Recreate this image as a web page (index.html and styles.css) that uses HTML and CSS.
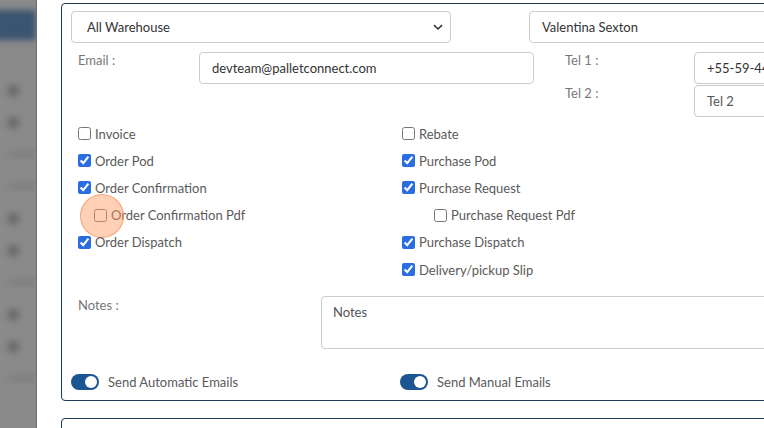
FILE: index.html
```html
<!DOCTYPE html>
<html>
<head>
<meta charset="utf-8">
<link rel="stylesheet" href="styles.css">
</head>
<body>
<div class="page">
  <aside class="sidebar">
    <div class="sidebar-inner">
      <div class="side-band"></div>
      <div class="side-item short"></div>
      <div class="side-item"><span class="dot"></span></div>
      <div class="side-item"><span class="dot"></span></div>
      <div class="side-item"><span class="bar"></span></div>
      <div class="side-item"><span class="bar"></span></div>
      <div class="side-item"><span class="dot"></span></div>
      <div class="side-item"><span class="dot"></span></div>
      <div class="side-item"><span class="bar"></span></div>
      <div class="side-item"><span class="dot"></span></div>
      <div class="side-item"><span class="dot"></span></div>
      <div class="side-item"><span class="bar"></span></div>
    </div>
  </aside>
  <main class="main">
    <section class="panel">
      <div class="row-top">
        <div class="select-wrap">
          <select class="field select"><option>All Warehouse</option></select>
        </div>
        <input class="field name" type="text" value="Valentina Sexton">
      </div>

      <div class="row-contact">
        <label class="lbl email-lbl">Email :</label>
        <input class="field email" type="text" value="devteam@palletconnect.com">
        <div class="tel-labels">
          <label class="lbl">Tel 1 :</label>
          <label class="lbl">Tel 2 :</label>
        </div>
        <div class="tel-inputs">
          <input class="field tel" type="text" value="+55-59-4471-2208">
          <input class="field tel" type="text" placeholder="Tel 2">
        </div>
      </div>

      <div class="checks">
        <div class="col">
          <label class="chk"><input type="checkbox">Invoice</label>
          <label class="chk"><input type="checkbox" checked>Order Pod</label>
          <label class="chk"><input type="checkbox" checked>Order Confirmation</label>
          <label class="chk sub-left"><span class="ripple"></span><input type="checkbox">Order Confirmation Pdf</label>
          <label class="chk"><input type="checkbox" checked>Order Dispatch</label>
        </div>
        <div class="col">
          <label class="chk"><input type="checkbox">Rebate</label>
          <label class="chk"><input type="checkbox" checked>Purchase Pod</label>
          <label class="chk"><input type="checkbox" checked>Purchase Request</label>
          <label class="chk sub-right"><input type="checkbox">Purchase Request Pdf</label>
          <label class="chk"><input type="checkbox" checked>Purchase Dispatch</label>
          <label class="chk"><input type="checkbox" checked>Delivery/pickup Slip</label>
        </div>
      </div>

      <div class="row-notes">
        <label class="lbl notes-lbl">Notes :</label>
        <textarea class="field notes" placeholder="Notes"></textarea>
      </div>

      <div class="row-toggles">
        <label class="toggle"><span class="switch on"><span class="knob"></span></span>Send Automatic Emails</label>
        <label class="toggle second"><span class="switch on"><span class="knob"></span></span>Send Manual Emails</label>
      </div>
    </section>
    <section class="panel next"></section>
  </main>
</div>
</body>
</html>
```

FILE: styles.css
```css
* { box-sizing: border-box; }
html, body {
  margin: 0;
  padding: 0;
  width: 764px;
  height: 428px;
  overflow: hidden;
  background: #fff;
  font-family: "Lato", "Open Sans", sans-serif;
  font-size: 13px;
  color: #5a5a5a;
}
.page {
  display: flex;
  height: 428px;
}
.sidebar {
  width: 37px;
  flex: none;
  background: #8a8a8a;
  border-right: 1px solid #6d6d6d;
  overflow: hidden;
}
.sidebar-inner {
  filter: blur(3px);
  padding-top: 10px;
}
.side-band {
  height: 30px;
  background: #3a5471;
  margin-left: -6px;
  margin-bottom: 8px;
}
.side-item {
  height: 32px;
  display: flex;
  align-items: center;
  padding-left: 8px;
}
.side-item.short { height: 26px; justify-content: flex-end; padding-right: 2px; }
.side-item .dot {
  width: 11px; height: 11px; border-radius: 3px; background: #6a6a6a;
}
.side-item .bar {
  width: 28px; height: 6px; background: #7e7e7e;
}
.main {
  flex: 1;
  padding: 3px 0 0 24px;
  min-width: 0;
}
.panel {
  width: 760px;
  border: 1px solid #1e3a56;
  border-radius: 4px;
  padding: 7px 0 0 9px;
  height: 398px;
  position: relative;
}
.panel.next {
  margin-top: 17px;
  height: 40px;
}
.field {
  font-family: inherit;
  font-size: 13px;
  color: #333;
  border: 1px solid #ccc;
  border-radius: 4px;
  background: #fff;
  padding: 0 12px;
  height: 32px;
  outline: none;
}
.row-top {
  display: flex;
  gap: 78px;
}
.select-wrap { position: relative; }
.select {
  width: 380px;
  appearance: none;
  -webkit-appearance: none;
  padding-left: 15px;
  background-image: url("data:image/svg+xml;utf8,<svg xmlns='http://www.w3.org/2000/svg' width='10' height='7' viewBox='0 0 10 7'><path d='M1 1.2 L5 5 L9 1.2' fill='none' stroke='%23333' stroke-width='1.6'/></svg>");
  background-repeat: no-repeat;
  background-position: right 7px center;
}
.name { width: 300px; }
.row-contact {
  display: flex;
  margin-top: 9px;
  height: 65px;
}
.lbl { color: #777; }
.email-lbl {
  width: 128px;
  padding: 0 0 0 7px;
}
.email { width: 335px; }
.tel-labels {
  display: flex;
  flex-direction: column;
  gap: 17px;
  padding: 0 0 0 31px;
  width: 160px;
}
.tel-inputs {
  display: flex;
  flex-direction: column;
  gap: 1px;
}
.tel { width: 120px; }
.tel::placeholder { color: #555; }
.checks {
  display: flex;
  padding: 3px 0 0 7px;
  height: 179px;
}
.col {
  display: flex;
  flex-direction: column;
  width: 324px;
}
.chk {
  display: flex;
  align-items: center;
  height: 27.2px;
  position: relative;
}
.chk input {
  margin: 0 4px 0 0;
  width: 13px;
  height: 13px;
  accent-color: #2a6de0;
}
.sub-left { padding-left: 16px; }
.sub-right { padding-left: 32px; }
.ripple {
  position: absolute;
  left: 2px;
  top: -8px;
  width: 44px;
  height: 44px;
  border-radius: 50%;
  background: rgba(255, 150, 90, 0.45);
  border: 1.5px solid rgba(245, 150, 95, 0.8);
}
.row-notes {
  display: flex;
  height: 75px;
}
.notes-lbl {
  width: 250px;
  padding: 1px 0 0 7px;
}
.notes {
  width: 460px;
  height: 53px;
  padding: 7px 11px;
  resize: none;
}
.notes::placeholder { color: #555; }
.row-toggles {
  display: flex;
  align-items: center;
  height: 21px;
}
.toggle {
  display: flex;
  align-items: center;
  gap: 9px;
  width: 329px;
}
.switch {
  width: 28px;
  height: 16px;
  border-radius: 8px;
  background: #1b5592;
  position: relative;
  display: inline-block;
}
.knob {
  position: absolute;
  right: 2px;
  top: 2px;
  width: 12px;
  height: 12px;
  border-radius: 50%;
  background: #fff;
}
```
